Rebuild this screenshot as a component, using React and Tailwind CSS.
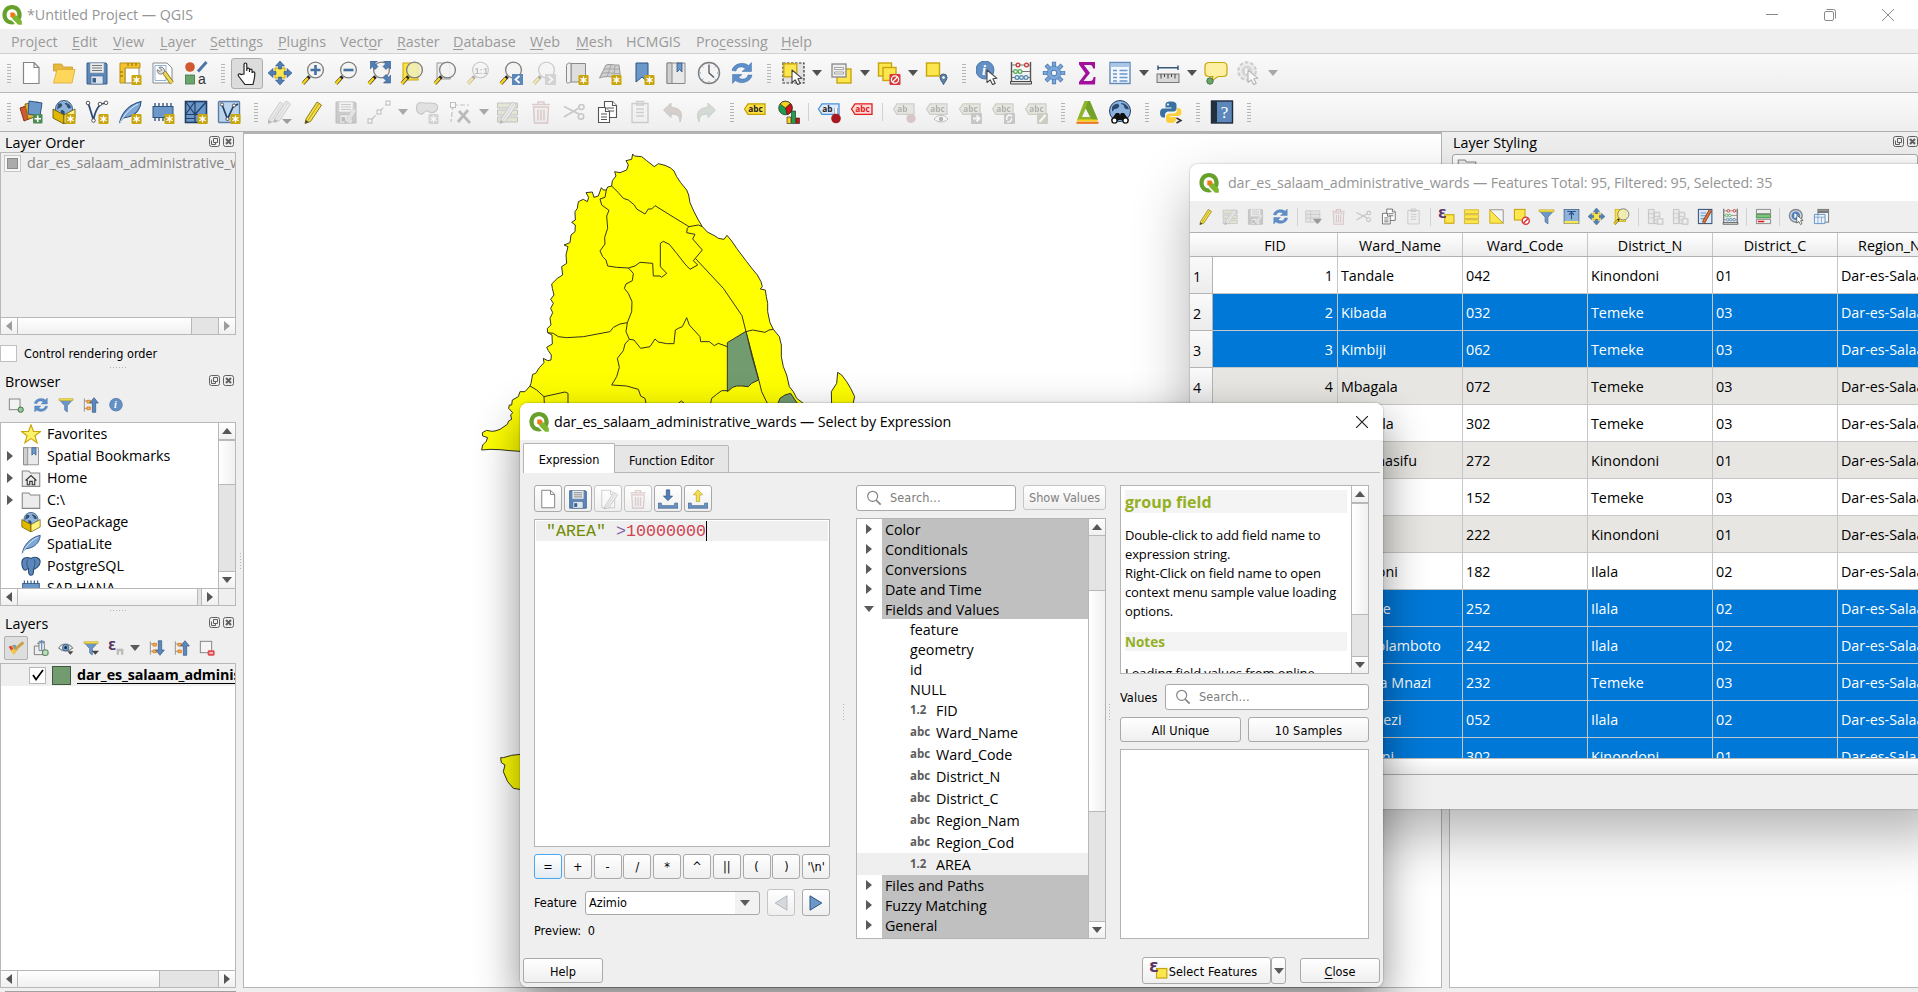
import React from "react";

/* ---------- icon pieces, all on a 24 x 24 grid ---------- */

const Svg = ({ s = "size-6", dim, children }) => (
  <svg viewBox="0 0 24 24" className={`${s} shrink-0 ${dim ? "opacity-35" : ""}`} fill="none">
    {children}
  </svg>
);

const Badge = ({ c = "#c9a50c" }) => (
  <g>
    <rect x="13.5" y="14" width="10" height="10" rx="1" fill={c} />
    <path d="M18.5 15.5v7M15.4 17.2l6.2 3.6M21.6 17.2l-6.2 3.6" stroke="#fff" strokeWidth="1.3" />
    <circle cx="18.5" cy="19" r="1.7" fill="#fff" />
  </g>
);

const Lens = ({ fill = "#f3f3f1" }) => (
  <g>
    <path d="M8.5 15.5 2 22.5" stroke="#222" strokeWidth="3.4" />
    <path d="M6.8 17.2 1.6 22.8" stroke="#f5d11b" strokeWidth="2.6" />
    <circle cx="14.5" cy="9" r="7.9" fill={fill} fillOpacity=".85" stroke="#7d7d7d" strokeWidth="1.3" />
  </g>
);

const Disk = () => (
  <g>
    <path d="M2 2h19l1 1v20H2z" fill="#5b87bb" stroke="#3b5f8d" />
    <rect x="5" y="2" width="14" height="10" fill="#e9ecef" stroke="#8a97a5" strokeWidth=".6" />
    <path d="M7 4.500h10M7 7h10M7 9.500h10" stroke="#777" />
    <rect x="6" y="15" width="12" height="8" fill="#dfe5ec" stroke="#46658e" strokeWidth=".6" />
    <rect x="7.500" y="17" width="3.500" height="4.500" fill="#3b5f8d" />
  </g>
);

const Page = () => <path d="M4.500 1.500h10.500l5 5v16h-15.500zM15 1.500v5h5" fill="#fff" stroke="#858585" strokeWidth="1.200" />;

const Pen = () => (
  <g>
    <path d="m5 19 11-17 4.500 3L9.500 21.500 4 23.500z" fill="#f3e04a" stroke="#8d7a12" />
    <path d="m18 3.500-11 17" stroke="#b99f14" />
    <path d="m4 23.500.8-3.500 3 2z" fill="#444" />
  </g>
);

const Tag = ({ fill = "#fae043", stroke = "#c2a400", ink = "#222", t = "abc" }) => (
  <g>
    <path d="M1.500 9 5 3.800h17V14.300H5z" fill={fill} stroke={stroke} strokeWidth="1.300" />
    <text x="5.300" y="12" fontSize="8.300" fontWeight="700" fontFamily="Open Sans, sans-serif" fill={ink}>{t}</text>
  </g>
);

const Trash = ({ c = "#b07a7a" }) => (
  <g stroke={c} strokeWidth="1.500">
    <path d="M4.500 7h15l-1 16h-13z" fill="#ddd" fillOpacity=".5" />
    <path d="M3 4.500h18M9 4V2h6v2M9 9.500v11M12 9.500v11M15 9.500v11" />
  </g>
);

const Sheets = () => (
  <g stroke="#555" strokeWidth="1.100" fill="#fff">
    <path d="M9.500 1.500h8l4 4v12h-12z" />
    <path d="M17.500 1.500v4h4M12 8h7M12 11h7" />
    <path d="M3.500 7.500h7l4 4v11h-11z" />
    <path d="M10.500 7.500v4h4M6 14h6M6 17h6M6 19.500h6" />
  </g>
);

const Scissors = () => (
  <g stroke="#777" strokeWidth="1.600">
    <path d="M2 6.500 17 14M2 17l15-9" />
    <circle cx="19.500" cy="7" r="2.500" />
    <circle cx="19" cy="16.500" r="2.700" />
  </g>
);

const Clip = () => (
  <g stroke="#888" strokeWidth="1.400">
    <path d="M4 3.500h16v19H4z" fill="#eee" />
    <path d="M8.500 1.500h7v3.500h-7zM8 9h8M8 12.500h8M8 16h8" />
  </g>
);

const Cycle = () => (
  <g fill="#5e8fcb" stroke="#3f6ea8" strokeWidth=".5">
    <path d="M2 9.500C3 3 13 0 18.500 4.500L21.500 1.500v9h-9.500l3.500-3C11.500 4.500 7 6 6 10z" />
    <path d="M22 14c-1 7-11 10-16.500 5.500L2.500 22.500v-9H12l-3.500 3c4 3 8.500 1.500 9.500-2.500z" />
  </g>
);

const Abacus = () => (
  <g>
    <path d="M2.500 1v21M21.500 1v21" stroke="#555" strokeWidth="1.400" />
    <path d="M3 4h18M3 10.500h18M3 16.500h18" stroke="#777" />
    <g fill="#fbe3e3" stroke="#c33" strokeWidth="1.200"><circle cx="9" cy="4" r="1.900" /><circle cx="17.500" cy="4" r="1.900" /></g>
    <g fill="#e2f5e2" stroke="#5a5" strokeWidth="1.200"><circle cx="6.500" cy="10.500" r="1.900" /><circle cx="11" cy="10.500" r="1.900" /></g>
    <g fill="#e0edf8" stroke="#58a" strokeWidth="1.200"><circle cx="8" cy="16.500" r="1.900" /><circle cx="12.500" cy="16.500" r="1.900" /><circle cx="17" cy="16.500" r="1.900" /></g>
    <path d="M1.500 20.500h21v2.500h-21z" fill="#ddd" stroke="#444" />
  </g>
);

const Pointer = () => <path d="M11 9v12.500l3.200-2.700 2.300 4.800 2.700-1.200-2.300-4.700 4.100-.4z" fill="#fff" stroke="#444" strokeWidth="1.100" strokeLinejoin="round" />;

const Funnel = () => (
  <g>
    <path d="M2 4h20l-8 9v9.500l-4-3V13z" fill="#6b97c9" stroke="#476f9e" />
    <path d="M1.500 2.500h21v3h-21z" fill="#f5e04a" stroke="#b3a024" strokeWidth=".8" />
  </g>
);

const Quad = () => (
  <g>
    <rect x="7" y="7" width="10" height="10" fill="#fbe64d" stroke="#c9a50c" />
    <g fill="#4f7fb5" stroke="#2d5584" strokeWidth=".6">
      <path d="m12 0 4.500 5H13.500v3h-3V5H7.500zM12 24l4.500-5H13.500v-3h-3v3H7.500zM0 12l5-4.500v3h3v3H5v3zM24 12l-5-4.500v3h-3v3h3v3z" />
    </g>
  </g>
);

const Globe = () => (
  <g>
    <circle cx="12" cy="9" r="8.500" fill="#8fb2da" stroke="#3c5f88" />
    <path d="M6 4c3-2 5 0 4 2s-4 2-5 4zM13 3c3 0 6 2 6 5-2 1-4 0-4-2s-3-1-2-3zM9 10c3 0 5 2 3 5-2-1-4-2-3-5z" fill="#33506f" />
  </g>
);

const Box = () => (
  <g>
    <Globe />
    <path d="m1 9 11 6v9L1 18z" fill="#e0b800" stroke="#5e4d00" strokeWidth=".8" />
    <path d="m23 9-11 6v9l11-6z" fill="#fff27a" stroke="#5e4d00" strokeWidth=".8" />
  </g>
);

const Feather = () => (
  <g>
    <path d="M1.500 23C3 15 9 5 23 1.500c0 6-4 13-13 15.500l-5 1z" fill="#7fa8d6" stroke="#2d5584" strokeWidth="1.100" />
    <path d="M2 22.500C7 13 14 7 20 4" stroke="#e4eef9" strokeWidth="1" />
  </g>
);

const Chip = () => (
  <g>
    <path d="M4 3v18M8 3v18M12 3v18M16 3v18M20 3v18" stroke="#2b4c75" strokeWidth="1.300" />
    <rect x="2" y="6.500" width="20" height="11" fill="#6b97c9" stroke="#2d5584" />
  </g>
);

const Book = () => (
  <g>
    <path d="M3 2h18v20.500H3z" fill="#e9e9e9" stroke="#888" />
    <path d="M3 2h5v20.500H3z" fill="#cfcfcf" stroke="#888" />
    <path d="M13 2h5v9l-2.500-2.500L13 11z" fill="#6b97c9" stroke="#2d5584" strokeWidth=".8" />
  </g>
);

const Map3 = () => (
  <g stroke="#8a8a8a">
    <path d="M6 2.500h14.500V21H6z" fill="#dedede" />
    <path d="M6 2.500v18.500c-4 2-4.500 1-4.500-1V4.500C2 2 4.500 1.500 6 2.500z" fill="#f0f0f0" />
  </g>
);

const Gear = ({ f = "#7ba6da", e = "#4a78ad" }) => (
  <g>
    <path d="M12 .8v22.400M.8 12h22.400M4 4l16 16M20 4 4 20" stroke={e} strokeWidth="4.200" />
    <path d="M12 1.500v21M1.500 12h21M4.600 4.600l14.800 14.800M19.400 4.600 4.600 19.400" stroke={f} strokeWidth="2.800" />
    <circle cx="12" cy="12" r="6.800" fill={f} stroke={e} strokeWidth=".6" />
    <circle cx="12" cy="12" r="2.800" fill="#f2f6fb" stroke={e} />
  </g>
);

const Info = () => (
  <g>
    <circle cx="11" cy="10.500" r="9.500" fill="#6590c4" stroke="#4673a8" />
    <text x="8" y="16" fontSize="15" fontStyle="italic" fontWeight="700" fontFamily="Liberation Serif, serif" fill="#fff">i</text>
  </g>
);

const Eps = () => (
  <text x="0" y="14.500" fontSize="18" fontWeight="700" fontFamily="DejaVu Sans, sans-serif" fill="#5c3566">Ɛ</text>
);

const Stop = () => (
  <g>
    <rect x="12.500" y="13" width="11" height="11" rx="1" fill="#d8373c" />
    <circle cx="18" cy="18.500" r="3.600" stroke="#fff" strokeWidth="1.300" />
    <path d="m15.500 21 5-5" stroke="#fff" strokeWidth="1.300" />
  </g>
);

const TreeArrow = ({ up }) => (
  <g>
    <path d="M2 2v20M2 6h7M2 17h7" stroke="#888" strokeWidth="1.300" />
    <path d="M6 5h5v4H6zM6 15h5v4H6z" fill="#f6b46a" stroke="#e07b10" strokeWidth="1.400" />
    <path d={up ? "M16.500 1 23 9h-4v14h-5V9h-4z" : "M16.500 23 23 15h-4V1h-5v14h-4z"} fill="#5b87bb" stroke="#2d5584" />
  </g>
);

const I = {
  page: <Page />,
  open: <g><path d="M1.500 3h8l2 3h9v4h-19z" fill="#e6b93a" stroke="#c9992a" strokeWidth=".8" /><path d="M1.500 22 5 8.500h18L20 22z" fill="#fdd65a" stroke="#d9aa33" strokeWidth=".8" /></g>,
  disk: <Disk />,
  layout: <g><path d="M7 6h14v16H7z" fill="#fff" stroke="#888" /><path d="M2 2h20v5H7v15H2z" fill="#f2c230" stroke="#b78f10" /><path d="M10 2v3M14 2v3M18 2v3M2 11h3M2 15h3" stroke="#8a6b00" /><Badge /></g>,
  report: <g><path d="M2 2h14l5 5v15H2z" fill="#fff" stroke="#888" /><path d="M4 4.500h11v15H4z" stroke="#8fb2da" /><path d="m13 11 8 11" stroke="#8d7a12" strokeWidth="4.500" /><path d="m13 11 8 11" stroke="#f0d660" strokeWidth="2.800" /><path d="M8 6.500c3-1.500 6 1 5.500 4.500l-3 2c-3 .5-5-2-4-4.500l2.500 2 1.500-1.500z" fill="#ddd" stroke="#777" /></g>,
  style: <g><circle cx="6" cy="6" r="4.800" fill="#d1582f" /><path d="M14 10.500 22.500 1" stroke="#4b76a8" strokeWidth="3" /><rect x="1.500" y="14" width="9" height="9" fill="#6aa56c" stroke="#407443" strokeWidth=".8" /><text x="14" y="23" fontSize="14" fontFamily="Liberation Sans, sans-serif" fill="#333">a</text></g>,
  hand: <path d="M8 13V3.500c0-2 2.800-2 2.800 0V10v-1.500c0-1.800 2.700-1.800 2.700 0V11v-1.500c0-1.800 2.600-1.800 2.600 0V12c.3-1.800 2.900-1.500 2.700.5 0 5-.8 6-1.800 11h-8L2.500 15c-1-1.800 1-3 2.500-1.500z" fill="#fff" stroke="#222" strokeWidth="1.200" transform="translate(1 0)" />,
  quad: <Quad />,
  zoomIn: <g><Lens /><path d="M14.500 4v10M9.500 9h10" stroke="#44719f" strokeWidth="2.600" /></g>,
  zoomOut: <g><Lens /><path d="M9.500 9h10" stroke="#44719f" strokeWidth="2.600" /></g>,
  full: <g><Lens /><g fill="#4f7fb5" stroke="#2d5584" strokeWidth=".6"><path d="M3.500 0h7L8 2.500l3 3-3 3-3-3L3.500 8zM23.500 0h-7L19 2.500l-3 3 3 3 3-3L23.500 8zM23.500 22h-7l2.500-2.500-3-3 3-3 3 3 1.500-2.500z" /></g></g>,
  zoomSel: <g><rect x="3" y="2" width="15" height="17" fill="#fbe53d" stroke="#c9a50c" /><Lens fill="#eeeec0" /></g>,
  zoomLayer: <g><rect x="4" y="2" width="13" height="16" fill="#eee" stroke="#999" /><Lens /></g>,
  zoomNative: <g><Lens /><text x="8.500" y="12.500" fontSize="9.500" fontWeight="700" fontFamily="Liberation Sans, sans-serif" fill="#555">1:1</text></g>,
  zoomLast: <g><Lens /><rect x="13" y="13" width="11" height="11" fill="#5b87bb" /><path d="m20.500 15-4 3.500 4 3.500" stroke="#fff" strokeWidth="1.800" /></g>,
  zoomNext: <g><Lens /><rect x="13" y="13" width="11" height="11" fill="#999" /><path d="m16.500 15 4 3.500-4 3.500" stroke="#fff" strokeWidth="1.800" /></g>,
  newMap: <g><Map3 /><Badge /></g>,
  new3d: <g><path d="M8 4c4-1.500 8 .5 13 0l1.500 12c-6 1-14-2-21 1z" fill="#d0d0d0" stroke="#999" /><path d="M6 8.500c5-2 10 .5 15.500-.5M3.500 12.500c6-2 12 .5 18.500 0M13 4 9 16M17 4.500l-1 11" stroke="#a6a6a6" /><Badge /></g>,
  newMark: <g><path d="M5 2h12v19l-6-5-6 5z" fill="#6b97c9" stroke="#2d5584" /><Badge /></g>,
  book: <Book />,
  clock: <g><circle cx="12" cy="12" r="10.500" fill="#f4f4f4" stroke="#7d7d7d" strokeWidth="1.400" /><path d="M12 4v8l5 4.500" stroke="#555" strokeWidth="1.300" /><path d="M12 2.500v1.500M12 20v1.500M2.500 12H4M20 12h1.500M5.300 5.300l1 1M17.700 17.700l1 1M5.300 18.700l1-1M17.700 6.300l1-1" stroke="#6b97c9" /></g>,
  cycle: <Cycle />,
  select: <g><path d="M2 2h21v20H2z" fill="#e2e2e2" stroke="#333" strokeWidth="1.200" strokeDasharray="2.500 1.500" /><rect x="2.800" y="2.800" width="13" height="13" fill="#fbe64d" stroke="#c9a50c" strokeWidth="1.400" /><Pointer /></g>,
  selForm: <g><rect x="8" y="8" width="14" height="14" fill="#fbe64d" stroke="#c9a50c" strokeWidth="1.400" /><rect x="3" y="3" width="14" height="13" fill="#eee" stroke="#888" strokeWidth="1.300" /><path d="M5.500 6.500h9v2h-9zM5.500 11h9v2h-9z" fill="#fff" stroke="#999" strokeWidth=".9" /></g>,
  deselect: <g><rect x="1.500" y="2" width="13" height="13" fill="#fbe64d" stroke="#c9a50c" strokeWidth="1.400" /><rect x="6" y="6.500" width="13" height="13" fill="#fbe64d" stroke="#c9a50c" strokeWidth="1.400" /><Stop /></g>,
  selLoc: <g><rect x="1.500" y="2" width="13" height="13" fill="#fbe64d" stroke="#c9a50c" strokeWidth="1.400" /><path d="M18.500 23.500c-1.500-3-3.500-5-3.500-7a3.500 3.500 0 0 1 7 0c0 2-2 4-3.500 7z" fill="#5f83a8" stroke="#3d5c7c" /><circle cx="18.500" cy="16.500" r="1.300" fill="#fff" /></g>,
  identify: <g><g transform="translate(-1.500 -1) scale(.95)"><Info /></g><Pointer /></g>,
  abacus: <Abacus />,
  gear: <Gear />,
  sigma: <path d="M4 1h16v6.500h-2C17.500 4.500 16.500 4 14 4H9l6 8-6.500 8H14c3 0 4-.5 4.500-4H20.500L20 23.500H4V21l6.500-8.500L4 3.500z" fill="#a3109e" />,
  table: <g><rect x="2" y="1.500" width="20" height="21" fill="#f2f7fc" stroke="#6289b5" strokeWidth="1.400" /><path d="M2.500 2h19v4h-19z" fill="#a9c6e6" /><path d="M5 9.500h4M5 13h4M5 16.500h4M5 20h4M11.500 9.500h8M11.500 13h8M11.500 16.500h8M11.500 20h8" stroke="#6b97c9" strokeWidth="1.600" /></g>,
  measure: <g><path d="M2 4.500v4.500M22 4.500v4.500M2 6.800h20" stroke="#36587f" strokeWidth="1.500" /><rect x="1" y="13" width="22" height="8.500" fill="#d8d8d8" stroke="#777" /><path d="M5 13v4.500M8.500 13v3M12 13v4.500M15.500 13v3M19 13v4.500" stroke="#444" /></g>,
  tips: <g><path d="M5 1.500h14c2.500 0 4 1.500 4 4v6c0 2.500-1.500 4-4 4h-5L6 21l3-5.500H5c-2.500 0-4-1.500-4-4v-6c0-2.500 1.500-4 4-4z" fill="#fdf0a0" stroke="#c9a50c" strokeWidth="1.200" /><circle cx="6" cy="20" r="3.200" fill="#6ba56c" stroke="#407443" /></g>,
  action: <g><g transform="translate(-1 -1) scale(.92)"><circle cx="12" cy="12" r="9.500" fill="#ddd" stroke="#888" strokeWidth="2.500" strokeDasharray="4 2" /><circle cx="12" cy="12" r="6" fill="#999" /><path d="m10 8.500 6 3.500-6 3.500z" fill="#fff" /></g><Pointer /></g>,

  dsm: <g><path d="m1 8 12-4 4 12-12 5z" fill="#d1582f" stroke="#8a3416" /><path d="m6 4 13-2 1 14-11 3z" fill="#e0b23b" stroke="#8a6b00" /><path d="m10 1 13 2-2 13-12-2z" fill="#6b97c9" stroke="#2d5584" /><rect x="14" y="14" width="9.500" height="9.500" rx="1" fill="#4d8b55" /><path d="M18.700 15.500v6.500M15.500 18.700h6.500" stroke="#fff" strokeWidth="1.600" /></g>,
  gpkg: <g><Box /><Badge /></g>,
  vee: <g><path d="M3.500 4c2 6 3 10 5 16M8.500 20c1-6 3-11 6-14.500M14.500 4.500l6-1.500" stroke="#2b4c75" strokeWidth="1.800" /><g fill="#fff" stroke="#555"><circle cx="3" cy="3" r="1.800" /><circle cx="15" cy="4" r="1.800" /><circle cx="21" cy="2.800" r="1.800" /><circle cx="8.500" cy="20.500" r="1.800" /></g><Badge /></g>,
  featherNew: <g><Feather /><Badge /></g>,
  chipNew: <g><Chip /><Badge /></g>,
  mesh: <g><rect x="1.500" y="1.500" width="21" height="21" fill="#6b97c9" stroke="#1f3f66" strokeWidth="1.600" /><path d="M1.500 14.500h21M11 1.500v21M1.500 1.500l9.500 13M11 1.500l-9.500 13M11 14.500l11.500-13M1.500 18.500H11" stroke="#1f3f66" strokeWidth="1.200" /><Badge /></g>,
  vLayer: <g><rect x="1.500" y="1.500" width="21" height="21" rx="1" fill="#bcd3ec" stroke="#5a7ea8" strokeWidth="1.400" /><path d="M5 4.500 10.500 19 16 7l5-3" stroke="#1f3f66" strokeWidth="1.700" /><g fill="#fff" stroke="#555"><circle cx="5" cy="4.500" r="1.600" /><circle cx="10.500" cy="19" r="1.600" /><circle cx="17" cy="5.500" r="1.600" /></g><Badge /></g>,
  pencils: <g><g transform="translate(-4 0)" className="grayscale"><Pen /></g><g transform="translate(2 -1)" className="grayscale"><Pen /></g><path d="M14 19h10l-5 5z" fill="#000" /></g>,
  pen: <Pen />,
  saveEdits: <g className="grayscale"><Disk /><g transform="translate(8 7) scale(.7)"><Pen /></g></g>,
  line: <g><path d="m3 21 18-18" stroke="#666" strokeWidth="1.200" strokeDasharray="8 3" /><g fill="#fff" stroke="#555"><rect x="1" y="19" width="4" height="4" /><rect x="10" y="10" width="4" height="4" /><rect x="19" y="1" width="4" height="4" /></g></g>,
  blob: <g><path d="M1.500 8c0-6 5-6 8-5s12-2 13 3-5 8-8 6-4-1-6 1-7 1-7-5z" fill="#bbb" stroke="#777" strokeWidth="1.200" /><Badge c="#999" /></g>,
  vertex: <g><path d="M5 5h16M5 5 3 22" stroke="#666" strokeWidth="1.200" strokeDasharray="5 2" /><rect x="2.500" y="2.500" width="5" height="5" fill="#fff" stroke="#555" /><path d="m10 22 10-12M11 11l11 12" stroke="#555" strokeWidth="2.800" /></g>,
  multi: <g><path d="M1.500 3h20v5h-20zM1.500 10h20v5h-20zM1.500 17h20v5h-20z" fill="#c8c89a" stroke="#666" /><g className="grayscale"><Pen /></g></g>,
  trash: <Trash />,
  cut: <Scissors />,
  copy: <Sheets />,
  paste: <Clip />,
  undo: <path d="M1.500 10 9 3v4.500c8 0 13 4 9 14.500 0-6-3-8-9-8V17.500z" fill="#a08a80" stroke="#777" transform="translate(1 0)" />,
  redo: <path d="M1.500 10 9 3v4.500c8 0 13 4 9 14.500 0-6-3-8-9-8V17.500z" fill="#9a9" stroke="#787" transform="matrix(-1 0 0 1 23 0)" />,
  tag: <Tag />,
  diagram: <g transform="translate(1.500 0)"><circle cx="8" cy="8" r="6.800" fill="#1f9e4b" stroke="#222" strokeWidth=".7" /><path d="M8 8 2.500 4A6.800 6.800 0 0 1 13 3.500z" fill="#f6d21b" stroke="#222" strokeWidth=".6" /><path d="M8 8 13 3.500A6.800 6.800 0 0 1 9.500 14.600z" fill="#c81414" stroke="#222" strokeWidth=".6" /><path d="M9.500 17h4v6.500h-4z" fill="#f6d21b" stroke="#222" strokeWidth=".6" /><path d="M14 11h4v12.500h-4z" fill="#1f9e4b" stroke="#222" strokeWidth=".6" /><path d="M18.500 18H22v5.500h-3.500z" fill="#c81414" stroke="#222" strokeWidth=".6" /></g>,
  tagPin: <g><Tag fill="#dbeafc" stroke="#4a90d9" t="ab" /><path d="M19 8v8" stroke="#999" strokeWidth="3.400" /><path d="M19 8v8" stroke="#fff" strokeWidth="1.800" /><circle cx="19" cy="18.500" r="4.800" fill="#a81a22" /></g>,
  tagRed: <Tag fill="#ffd9d9" stroke="#e21b1b" ink="#e21b1b" />,
  gPin: <g><Tag fill="#ccb" stroke="#888" ink="#333" t="ab" /><circle cx="19" cy="18.500" r="4.600" fill="#a77" /></g>,
  gEye: <g><Tag fill="#ccb" stroke="#888" ink="#333" /><path d="M9 19c4-5 10-5 14 0-4 4-10 4-14 0z" fill="#fff" stroke="#555" /><circle cx="16" cy="19" r="2.200" fill="#444" /></g>,
  gMove: <g><Tag fill="#ccb" stroke="#886" ink="#333" /><rect x="13" y="13" width="11" height="11" rx="1" fill="#777" /><path d="M15 18.500h6M18.500 15.500l3 3-3 3" stroke="#fff" strokeWidth="1.800" /></g>,
  gTurn: <g><Tag fill="#ccb" stroke="#886" ink="#333" /><rect x="13" y="13" width="11" height="11" rx="1" fill="#777" /><path d="M21 16.500c-3-3-6.500 0-5 3.500M16 22c3 0 5-1 4.500-4" stroke="#fff" strokeWidth="1.600" /></g>,
  gEdit: <g><Tag fill="#ccb" stroke="#886" ink="#333" /><rect x="13" y="13" width="11" height="11" rx="1" fill="#886" /><path d="m15.500 22 6-7" stroke="#fff" strokeWidth="2" /></g>,
  delta: <g><path d="M9.500 1h4.500L22.500 20H2zM10.800 8.500 7 17h8z" fill="#8fb62b" fillRule="evenodd" /><path d="M13 1h2l8 19h-5.500L10.800 8.500z" fill="#72a02a" /><path d="M2 20.500h20.500" stroke="#f6d21b" strokeWidth="2" /><path d="M1.500 22.800h22" stroke="#ee7a22" strokeWidth="2.200" /></g>,
  binoc: <g><circle cx="12" cy="11" r="10.500" fill="#8db1dd" stroke="#223f63" /><path d="M4 7c3-4 6-4 7-2s-2 4-4 4-1 3-3 2zM13 3c4 0 7 3 8 6-3 1-5-1-5-3s-3-1-3-3z" fill="#284a72" /><path d="M8 13h3l1 2 1-2h3l5 7-4 3-3.500-3h-3L7 23l-4-3z" fill="#111" /><circle cx="6.500" cy="20.500" r="2.600" fill="#fff" stroke="#111" strokeWidth="1.400" /><circle cx="17.500" cy="20.500" r="2.600" fill="#fff" stroke="#111" strokeWidth="1.400" /></g>,
  python: <g><path d="M11.500 1.500c-4 0-5 1.500-5 3.500v2.500h6v1H4.500C2 8.500 1 10.500 1 13s1 4.500 3.500 4.500H6V15c0-2 1.500-3.500 3.500-3.500h5c2 0 3-1.500 3-3V5c0-2-1.500-3.500-6-3.500z" fill="#3872a3" /><path d="M11.500 23c4 0 5.500-1.500 5.500-3.500V17h-6v-1h8c2.500 0 3.500-2 3.500-4s-1-4-3.500-4h-1v2c0 2-1.500 3.500-3.500 3.500h-4C8.500 13.500 7 15 7 16.500v3c0 2 1 3.500 4.500 3.500z" fill="#fdd03b" /><circle cx="9" cy="4.500" r="1" fill="#fff" /><path d="m17.500 18 4.500 2.500-4.500 2.500" stroke="#333" strokeWidth="1.500" /></g>,
  help: <g><rect x="1.500" y="1" width="21" height="22" fill="#5b87bb" stroke="#1d2a3a" strokeWidth="1.400" /><path d="M1.500 1H7v22H1.500z" fill="#22303f" /><text x="10.800" y="18" fontSize="17" fontFamily="Liberation Serif, serif" fill="#fff">?</text></g>,

  funnel: <Funnel />,
  addLayer: <g><rect x="2" y="3" width="16" height="16" fill="#f2f2f2" stroke="#888" strokeWidth="1.500" /><circle cx="19" cy="19" r="4" fill="#9cc79d" stroke="#407443" strokeWidth="1.500" /></g>,
  delLayer: <g><rect x="2" y="2" width="17" height="17" fill="#f5f5f5" stroke="#888" strokeWidth="1.500" /><rect x="13" y="15.500" width="10.500" height="8" rx="2" fill="#e04a4f" /><path d="M15.500 19.500h5.500" stroke="#fff" strokeWidth="1.800" /></g>,
  treeUp: <TreeArrow up />,
  treeDown: <TreeArrow />,
  info: <g transform="translate(1 1)"><Info /></g>,
  star: <path d="m12 1 3 8h8.500l-6.800 5 2.600 8.500L12 17.500l-7.300 5L7.300 14 .5 9H9z" fill="#fcf169" stroke="#c9a50c" strokeWidth="1.400" />,
  home: <g><path d="M1.500 3.500h8l2 2.500h11v16h-21z" fill="#ececec" stroke="#888" strokeWidth="1.300" /><path d="m5.500 15 6.500-6 6.500 6M7.500 14v6h3v-4h3v4h3v-6" stroke="#333" strokeWidth="1.300" /></g>,
  folder: <path d="M1.500 3.500h8l2 2.500h11v16h-21z" fill="#ececec" stroke="#888" strokeWidth="1.300" />,
  box: <Box />,
  feather: <Feather />,
  elephant: <g><path d="M12 3C6 0 1 3 1 8s2 9 4 9 2-2 4-2v3c0 3 1 5 3 5s3-2 3-5v-2c2 0 8-4 8-9S17 0 12 3z" fill="#5b87bb" stroke="#2b4c75" strokeWidth="1.300" /><path d="M8 4c-2 4-1 8 1 11M16 4c2 4 0 8-1 12" stroke="#2b4c75" /></g>,
  chip: <Chip />,
  brush: <g><path d="m1 10 8-3 6 7-6 8z" fill="#e8b13a" /><path d="m1 10 4-1.500 3 5.500-3 2z" fill="#d8433c" /><path d="M3 16l6-3 3 4-3 5z" fill="#efc94f" /><path d="m7 8 4-1 3 5-4 2z" fill="#6b97c9" /><path d="m12 13 11-9.500" stroke="#caa24d" strokeWidth="4.500" /></g>,
  group: <g><path d="M2 9h13v13H2zM6 5h9v13" stroke="#777" strokeWidth="1.400" /><path d="M9 2h8v14H9z" fill="#eaf1f8" stroke="#777" strokeWidth="1.300" /><path d="M13 1v14M10 5l3-4 3 4" stroke="#5b87bb" strokeWidth="1.600" /><rect x="14.500" y="15" width="8" height="8" rx="2" fill="#bfe0c0" stroke="#407443" strokeWidth="1.400" /></g>,
  eye: <g><path d="M1 12C6 4 16 4 22 12c-6 6-15 6-21 0z" fill="#f4f4f4" stroke="#888" strokeWidth="1.600" /><circle cx="11.500" cy="11.500" r="5" fill="#6b97c9" stroke="#36587f" /><circle cx="11.500" cy="11.500" r="2" fill="#123" /><path d="M14 17h9l-4.500 5z" fill="#444" /></g>,
  funnelDown: <g><Funnel /><path d="M13 16h11l-5.500 6z" fill="#444" /></g>,
  epsLayer: <g><Eps /><path d="M13 13h10v9h-3.500v-5h-3v5H13z" fill="#bbb" /></g>,

  epsSel: <g><rect x="9.500" y="9.500" width="13" height="12" fill="#fbe64d" stroke="#c9a50c" strokeWidth="1.500" /><Eps /></g>,
  rows: <path d="M2 2.500h20v5.500H2zM2 9.500h20V15H2zM2 16.500h20V22H2z" fill="#fbe64d" stroke="#c9a50c" />,
  invert: <g><path d="M2.500 2.500h19v19z" fill="#f4f4f4" stroke="#888" strokeWidth="1.200" /><path d="M2.500 2.500v19h19z" fill="#fbe64d" stroke="#c9a50c" strokeWidth="1.200" /></g>,
  unselect: <g><rect x="2" y="2" width="15" height="15" fill="#fbe64d" stroke="#c9a50c" strokeWidth="1.500" /><circle cx="18" cy="18" r="5" fill="#fff" stroke="#d8373c" strokeWidth="2" /><path d="m15 21 6-6" stroke="#d8373c" strokeWidth="2" /></g>,
  moveTop: <g><rect x="1.500" y="2" width="21" height="20" fill="#8fb2da" stroke="#36587f" /><path d="M2 18.500h20v3.500H2z" fill="#fbe64d" /><path d="M12 6v10M8.500 9.500 12 6l3.500 3.500M6 5h12" stroke="#2a5283" strokeWidth="1.600" /></g>,
  field: <g><path d="M2 2h8v20H2zM10 6h8v16h-8z" fill="#ddd" stroke="#777" strokeWidth="1.400" /><path d="M2 8h8M2 14h8M10 12h8M10 17h8" stroke="#777" /><Badge c="#999" /></g>,
  editForm: <g><rect x="2" y="2" width="19" height="20" fill="#dbe7f5" stroke="#36587f" strokeWidth="1.500" /><path d="M5 7h8M5 11h8M5 15h6" stroke="#6b97c9" strokeWidth="1.500" /><path d="M9 21 19 3" stroke="#7a2f10" strokeWidth="4.500" /><path d="M9 21 19 3" stroke="#e2793a" strokeWidth="2.800" /></g>,
  cond: <g><path d="M2 2h20v6H2z" fill="#eee" stroke="#666" /><path d="M2 9h20v5H2z" fill="#7cc47f" stroke="#2e7d32" /><path d="M2 16h20v6H2z" fill="#eee" stroke="#666" /><path d="M4 19h9" stroke="#e21b1b" strokeWidth="2" /></g>,
  actionOn: <g><circle cx="11" cy="11" r="9" fill="#c9d9eb" stroke="#888" strokeWidth="2" /><circle cx="11" cy="11" r="6" fill="#4f7fb5" /><path d="m9 7.500 6 3.500-6 3.500z" fill="#fff" /><g transform="translate(2.500 2) scale(.9)"><Pointer /></g></g>,
  dock: <g><rect x="7" y="2" width="15" height="18" fill="#f4f4f4" stroke="#777" strokeWidth="1.400" /><path d="M7 3h15v4H7z" fill="#777" /><path d="M2 9h15v13H2z" fill="#eaf1f8" stroke="#6b97c9" strokeWidth="1.400" /><path d="M2 13h15M7 9v13M12 13v9" stroke="#6b97c9" /></g>,
  newItem: <g><rect x="1" y="4" width="20" height="16" fill="#ccc" stroke="#777" /><path d="M1 9h20M1 14h20M8 4v16" stroke="#777" /><path d="M11 15h13l-6.500 8z" fill="#000" /></g>,
  editPage: <g><Page /><g transform="translate(3 2)" className="grayscale"><Pen /></g></g>,
  importI: <g><path d="M12 14 6.500 8.500H10V1h4v7.500h3.500z" fill="#4f7fb5" stroke="#2d5584" strokeWidth=".8" /><path d="M0 17h4v3h16v-3h4v6H0z" fill="#6b97c9" stroke="#36587f" strokeWidth=".8" /></g>,
  exportI: <g><path d="M12 1 6.500 7H10v8h4V7h3.500z" fill="#f5e04a" stroke="#b3a024" strokeWidth=".8" /><path d="M0 17h4v3h16v-3h4v6H0z" fill="#6b97c9" stroke="#36587f" strokeWidth=".8" /></g>,
  search: <g><circle cx="10" cy="9.500" r="7.500" stroke="#858585" strokeWidth="1.800" /><path d="m15 15 7 7" stroke="#858585" strokeWidth="2.600" /></g>,
};

const Logo = () => (
  <svg viewBox="0 0 24 24" className="size-5 shrink-0">
    <path d="M12 0C5.300 0 .5 5 .5 11.800S5.300 23.500 12 23.500c1.300 0 2.500-.2 3.600-.6l-4-4.200C8 18.500 5.600 15.500 5.600 11.800 5.600 7.800 8.200 5 12 5s6.400 2.800 6.400 6.600c0 1-.2 1.800-.4 2.600l3.800 3.800c1.200-1.700 1.800-3.900 1.800-6.200C23.600 5 18.700 0 12 0z" fill="#68a02c" />
    <path d="M12.500 12.300h4.600l6.700 7v4.500h-4.400l-6.900-7z" fill="#7db72f" />
    <path d="M10 9h4.500l2 2.500-4.200 4.500L10 13.500z" fill="#ee7913" />
  </svg>
);

/* ---------- small controls ---------- */

const Tri = ({ d, c = "#5a5a5a" }) => {
  const p = { down: "M0 2h10L5 8z", up: "M0 8h10L5 2z", left: "M8 0v10L2 5z", right: "M2 0v10l6-5z" }[d];
  return <svg viewBox="0 0 10 10" className="size-[10px] shrink-0"><path d={p} fill={c} /></svg>;
};

const Grip = ({ w = "w-[18px]" }) => (
  <div className={`${w} flex shrink-0 items-center justify-center pl-[3px]`}>
    <div className="h-[21px] w-[4px] bg-[radial-gradient(circle,#b4b4b4_0.6px,transparent_0.9px)] bg-[length:2px_3px]" />
  </div>
);
const Caret = ({ dim }) => <div className="flex w-[15px] shrink-0 items-center justify-center"><Tri d="down" c={dim ? "#a8a8a8" : "#505050"} /></div>;
const Sep = ({ w = "w-[8.500px]" }) => <div className={`${w} flex shrink-0 justify-center`}><div className="h-[18px] w-px bg-[#d2d2d2]" /></div>;

const Tool = ({ n, dim, on }) => (
  <div className="flex w-[33px] shrink-0 items-center justify-center">
    <div className={on ? "flex h-[31px] w-[32px] shrink-0 items-center justify-center rounded-[3px] border border-[#adadad] bg-[#dcdcdc]" : ""}>
      <Svg dim={dim}>{I[n]}</Svg>
    </div>
  </div>
);

/* entries: "|" and ":" grips, "v" caret, "-" separator, "~name" disabled, "+name" pressed */
const Bar = ({ items }) =>
  items.map((k, i) => {
    if (k === "|") return <Grip key={i} />;
    if (k === ":") return <Grip key={i} w="w-[16px]" />;
    if (k === "v") return <Caret key={i} />;
    if (k === "~v") return <Caret key={i} dim />;
    if (k === "-") return <Sep key={i} />;
    return <Tool key={i} n={k.replace(/^[~+]/, "")} dim={k[0] === "~"} on={k[0] === "+"} />;
  });

const DockButtons = () => (
  <div className="flex gap-[3px]">
    <svg viewBox="0 0 11 11" className="size-[11px]" fill="none" stroke="#606060"><rect x=".5" y=".5" width="10" height="10" rx="2" /><path d="M4.500 2.500h4v4h-4zM2.500 4.500v4h4v-2" /></svg>
    <svg viewBox="0 0 11 11" className="size-[11px]" fill="none" stroke="#606060"><rect x=".5" y=".5" width="10" height="10" rx="2" /><path d="m3 3 5 5M8 3 3 8" strokeWidth="2" /></svg>
  </div>
);

const DockTitle = ({ children, cls = "" }) => (
  <div className={`flex h-[22px] shrink-0 justify-between pr-[2px] pl-[5px] text-[14.3px] leading-[22px] text-black ${cls}`}>
    <span>{children}</span>
    <div className="pt-[4px]"><DockButtons /></div>
  </div>
);

const End = ({ d, dim, cls }) => (
  <div className={`flex shrink-0 items-center justify-center bg-linear-to-b from-white to-[#f0f0f0] ${cls}`}><Tri d={d} c={dim ? "#9c9c9c" : "#565656"} /></div>
);

const HBar = ({ slider, dim, corner }) => (
  <div className="flex h-[17px] shrink-0 border-t border-[#b8b8b8] bg-[#e4e4e4]">
    <End d="left" dim={dim} cls="w-[17px] border-r border-[#b8b8b8]" />
    <div className={`${slider} border-r border-[#b8b8b8] bg-linear-to-b from-white to-[#f0f0f0]`} />
    <div className="flex-1" />
    <End d="right" dim={dim} cls="w-[17px] border-l border-[#b8b8b8]" />
    {corner && <div className="w-[17px] border-l border-[#b8b8b8] bg-[#efefef]" />}
  </div>
);

const VBar = ({ top, slider }) => (
  <div className="flex w-[17px] shrink-0 flex-col border-l border-[#b8b8b8] bg-[#e4e4e4]">
    <End d="up" cls="h-[17px] border-b border-[#b8b8b8]" />
    <div className={top} />
    <div className={`${slider} border-y border-[#b8b8b8] bg-linear-to-r from-white to-[#f0f0f0]`} />
    <div className="flex-1" />
    <End d="down" cls="h-[17px] border-t border-[#b8b8b8]" />
  </div>
);

const Dots = ({ cls = "" }) => <div className={`mx-auto h-px w-[16px] shrink-0 bg-[repeating-linear-gradient(90deg,#b4b4b4_0_1px,transparent_1px_3px)] ${cls}`} />;
const VDots = () => <div className="h-[17px] w-px bg-[repeating-linear-gradient(180deg,#b4b4b4_0_1px,transparent_1px_3px)]" />;

const PushBtn = ({ cls = "", dim, focus, children }) => (
  <div className={`flex shrink-0 items-center justify-center rounded-[3px] border bg-linear-to-b from-white ${focus ? "border-[#4ba6f0] to-[#e2eaf2]" : dim ? "border-[#c4c4c4] to-[#efefef]" : "border-[#a9a9a9] to-[#efefef]"} ${cls}`}>
    {children}
  </div>
);

const U = ({ children }) => <span className="underline decoration-1 underline-offset-2">{children}</span>;

/* ---------- main window ---------- */

const MENU = [
  ["w-[61px]", "Pro", "j", "ect"], ["w-[41px]", "", "E", "dit"], ["w-[47px]", "", "V", "iew"], ["w-[50px]", "", "L", "ayer"],
  ["w-[68px]", "", "S", "ettings"], ["w-[62px]", "", "P", "lugins"], ["w-[57px]", "Vect", "o", "r"], ["w-[56px]", "", "R", "aster"],
  ["w-[77px]", "", "D", "atabase"], ["w-[46px]", "", "W", "eb"], ["w-[50px]", "", "M", "esh"], ["w-[70px]", "HCMGIS", "", ""],
  ["w-[85px]", "Pro", "c", "essing"], ["w-[40px]", "", "H", "elp"],
];

const ROW1 = ["page", "open", "disk", "layout", "report", "style", "|", "+hand", "quad", "zoomIn", "zoomOut", "full", "zoomSel", "zoomLayer", "~zoomNative", "zoomLast", "~zoomNext", "newMap", "new3d", "newMark", "book", "clock", "cycle", "|", "select", "v", "selForm", "v", "deselect", "v", "selLoc", "|", "identify", "abacus", "gear", "sigma", "table", "v", "measure", "v", "tips", "~action", "~v"];
const ROW2 = ["dsm", "gpkg", "vee", "featherNew", "chipNew", "mesh", "vLayer", "|", "~pencils", "pen", "~saveEdits", "~line", "~v", "~blob", "~vertex", "~v", "~multi", "~trash", "~cut", "copy", "~paste", "~undo", "~redo", ":", "tag", "diagram", "-", "tagPin", "tagRed", "-", "~gPin", "~gEye", "~gMove", "~gTurn", "~gEdit", "|", "delta", "binoc", "|", "python", "|", "help", "|"];

const BROWSER = [
  ["star", "Favorites", false], ["book", "Spatial Bookmarks", true], ["home", "Home", true], ["folder", "C:\\", true],
  ["box", "GeoPackage", false], ["feather", "SpatiaLite", false], ["elephant", "PostgreSQL", false], ["chip", "SAP HANA", false],
];

const SmallTool = ({ n }) => <div className="flex w-[25px] shrink-0 items-center justify-center"><Svg s="size-4">{I[n]}</Svg></div>;

const LeftDock = () => (
  <div className="flex w-[236px] shrink-0 flex-col">
    <DockTitle cls="-mb-[2px]">Layer Order</DockTitle>
    <div className="flex h-[183px] shrink-0 flex-col border border-[#b8b8b8]">
      <div className="-mt-px flex h-[22px] items-center gap-[6px] overflow-hidden pl-[3px] whitespace-nowrap text-[#868686]">
        <div className="flex size-[17px] shrink-0 items-center justify-center border border-[#c6c6c6] bg-[#f6f6f6]"><div className="size-[11px] border border-[#8a8a8a] bg-[#ababab]" /></div>
        <span className="text-[14.3px] tracking-[-0.07px]">dar_es_salaam_administrative_wards</span>
      </div>
      <div className="flex-1" />
      <HBar slider="w-[174px]" dim />
    </div>
    <div className="flex h-[37px] shrink-0 items-center gap-[7px]">
      <div className="size-[17px] border border-[#c0c0c0] bg-white" />
      <span className="pt-[2px] font-['DejaVu_Sans_Condensed','DejaVu_Sans',sans-serif] text-[12.6px]">Control rendering order</span>
    </div>
    <Dots cls="-mt-[5px] mb-[3px]" />
    <DockTitle>Browser</DockTitle>
    <div className="mb-[5px] flex h-[24px] shrink-0 items-center pl-[3px]">
      <SmallTool n="addLayer" /><SmallTool n="cycle" /><SmallTool n="funnel" /><SmallTool n="treeUp" /><SmallTool n="info" />
    </div>
    <div className="flex h-[184px] shrink-0 flex-col border border-[#b8b8b8] bg-white">
      <div className="flex min-h-0 flex-1">
        <div className="flex-1 overflow-hidden">
          {BROWSER.map(([ic, t, kids]) => (
            <div key={t} className="flex h-[22px] items-center">
              <div className="w-[20px] pl-[4px]">{kids && <Tri d="right" />}</div>
              <Svg s="size-5">{I[ic]}</Svg>
              <span className="pl-[6px] text-[14.3px] tracking-[-0.03px]">{t}</span>
            </div>
          ))}
        </div>
        <VBar top="h-0" slider="h-[45px]" />
      </div>
      <HBar slider="w-[180px]" corner />
    </div>
    <Dots cls="mt-[4px] mb-[2px]" />
    <DockTitle>Layers</DockTitle>
    <div className="mb-[3px] flex h-[25px] shrink-0 items-center pl-[4px]">
      <div className="flex h-[24px] w-[24px] items-center justify-center rounded-[2px] border border-[#b0b0b0] bg-[#dedede]"><Svg s="size-4">{I.brush}</Svg></div>
      <SmallTool n="group" /><SmallTool n="eye" /><SmallTool n="funnelDown" /><SmallTool n="epsLayer" /><div className="w-[16px] pl-[2px]"><Tri d="down" /></div>
      <SmallTool n="treeDown" /><SmallTool n="treeUp" /><SmallTool n="delLayer" />
    </div>
    <div className="flex h-[325px] shrink-0 flex-col border border-[#b8b8b8] bg-white">
      <div className="flex h-[22px] items-center overflow-hidden bg-[#efefef] pl-[28px] whitespace-nowrap">
        <div className="flex size-[17px] shrink-0 items-center justify-center border border-[#b8b8b8] bg-white">
          <svg viewBox="0 0 12 12" className="size-3" fill="none" stroke="#000" strokeWidth="1.700"><path d="m1 6 3 4.500L11 1" /></svg>
        </div>
        <div className="ml-[6px] size-[19px] shrink-0 border border-[#42573f] bg-[#729b6f]" />
        <span className="pl-[6px] text-[14.3px] font-bold tracking-[-0.1px] underline underline-offset-[3px]">dar_es_salaam_administrative_wards</span>
      </div>
      <div className="flex-1" />
      <HBar slider="w-[142px]" />
    </div>
    <div className="mt-[3px] ml-[5px] h-px shrink-0 bg-[#a0a0a0]" />
  </div>
);

const WARDS = "M488 42 493 48 515 50 530 62 553 80 565 71 585 76 602 84 612 93 620 110 632 128 650 150 656 165 660 188 672 215 685 240 697 260 712 276 735 288 745 295 762 298 771 286 785 303 800 325 815 345 830 365 847 387 862 405 873 425 877 440 871 447 886 450 889 470 893 490 893 515 900 548 910 568 928 590 934 615 934 650 940 680 950 705 958 740 970 755 980 775 1000 790V960H160L150 934 120 932 90 929 60 928 35 930 38 915 48 905 53 893 38 888 37 878 50 871 65 874 75 873 90 868 112 853 116 843 125 838 122 825 128 818 116 805 118 795 125 795 127 780 145 770 150 755 165 755 180 738 183 730 188 703 197 700 208 683 222 668 220 655 233 662 243 660 244 645 235 632 230 622 247 612 246 585 233 578 232 565 243 555 240 535 248 518 242 505 250 490 242 478 252 465 247 445 245 432 262 415 278 405 275 380 290 370 288 345 294 320 282 315 300 308 303 285 315 275 316 255 305 247 316 240 315 215 322 205 325 185 340 178 352 185 356 172 348 158 367 156 372 172 385 168 394 143 400 150 409 150 413 141 425 138 427 122 438 108 434 95 450 98 470 90 475 75 468 62 485 58Z";
const LINES = [
  "M425 138 445 158 460 175 475 180 493 195 500 207 525 222 535 207 545 207 555 197 600 225 657 260 685 255 697 260",
  "M409 150 405 172 390 177 395 195 417 211 410 228 413 265 404 292 405 312 390 333 398 350 408 360 413 378 440 382 475 384 495 378 510 367 548 370 550 408 570 408 575 412 590 400 571 380 571 310 580 304 598 313 620 340 645 372 660 388 683 375 670 362 676 355 697 330 668 297 675 283 650 278 652 265 657 260",
  "M676 355 760 445 816 527 828 575M828 575 848 570 885 577 897 570 910 568M828 575 848 650 867 722 875 755 892 790",
  "M475 384 490 400 487 422 468 432 463 445 475 460 486 485 485 515 472 548 468 575 478 598M472 548 450 552 430 562 420 575 340 590 290 593 265 590 250 580 233 578",
  "M478 598 492 600 512 625 540 620 555 597 565 606 590 611 612 611 616 570 625 565 637 560 650 533 658 555 690 590 692 605 718 605 733 617 745 610 772 620",
  "M478 598 465 612 460 632 442 655 448 682 440 710 425 735 470 738 505 748 512 768 525 775 528 790M180 738 200 750 222 770 223 790M222 770 285 756 294 760 294 790M722 790 725 775 740 763 755 752 772 752M625 790 634 783 643 790",
];

const MapCanvas = () => (
  <div className="h-[856px] w-[1199px] shrink-0 overflow-hidden border border-t-2 border-[#b4b4b4] bg-white">
    <svg viewBox="0 0 1197 853" className="h-[853px] w-[1197px]">
      <g transform="translate(226 6) scale(.33333)" stroke="#333323" strokeWidth="3" strokeLinejoin="round" fill="none">
        <path d={WARDS} fill="#ffff00" />
        {LINES.map((d) => <path key={d} d={d} />)}
        <path d="M772 608 828 574 846 650 866 720 855 725 845 730 835 740 815 738 800 738 788 742 772 755Z" fill="#729b6f" />
        <path d="M920 800 930 775 945 765 962 760 975 780 990 800Z" fill="#729b6f" />
        <path d="M1103 697 1115 705 1130 725 1142 745 1154 770 1147 800H1085L1084 755 1100 730Z" fill="#ffff00" />
        <path d="M160 1842 125 1846 100 1853 92 1853 94 1868 105 1875 100 1895 113 1925 130 1945 160 1950Z" fill="#ffff00" />
      </g>
    </svg>
  </div>
);

/* ---------- attribute table window ---------- */

const COLS = ["FID", "Ward_Name", "Ward_Code", "District_N", "District_C", "Region_Nam"];
const ROWS = [
  ["Tandale", "042", "Kinondoni", "01"], ["Kibada", "032", "Temeke", "03", 1], ["Kimbiji", "062", "Temeke", "03", 1], ["Mbagala", "072", "Temeke", "03"],
  ["Sandala", "302", "Temeke", "03"], ["Hananasifu", "272", "Kinondoni", "01"], ["Keko", "152", "Temeke", "03"], ["Kawe", "222", "Kinondoni", "01"],
  ["Kivukoni", "182", "Ilala", "02"], ["Majohe", "252", "Ilala", "02", 1], ["Gongolamboto", "242", "Ilala", "02", 1], ["Pemba Mnazi", "232", "Temeke", "03", 1],
  ["Kinyerezi", "052", "Ilala", "02", 1], ["Mbweni", "302", "Kinondoni", "01", 1],
];
const TTOOLS = ["pen", "~multi", "~saveEdits", "cycle", "-", "~newItem", "~trash", "~cut", "copy", "~paste", "-", "epsSel", "rows", "invert", "unselect", "funnel", "moveTop", "quad", "zoomSel", "-", "~field", "~field", "editForm", "abacus", "-", "cond", "-", "actionOn", "dock"];

const AttributeTable = () => (
  <div className="absolute top-[164px] left-[1190px] flex h-[645px] w-[760px] flex-col overflow-hidden rounded-tl-[8px] bg-[#efefef] shadow-[0_0_2px_rgba(0,0,0,0.35),0_26px_56px_rgba(0,0,0,0.3)]">
    <div className="flex h-[37px] shrink-0 items-center gap-[9px] bg-white pl-[9px] text-[14.3px] tracking-[-0.13px] text-[#959595]"><Logo />dar_es_salaam_administrative_wards — Features Total: 95, Filtered: 95, Selected: 35</div>
    <div className="flex h-[31px] shrink-0 items-center pl-[3px]">
      {TTOOLS.map((k, i) => k === "-" ? <Sep key={i} w="w-[8.200px]" /> : (
        <div key={i} className="flex w-[25px] shrink-0 justify-center"><Svg s="size-[17px]" dim={k[0] === "~"}>{I[k.replace("~", "")]}</Svg></div>
      ))}
    </div>
    <div className="flex h-[25px] shrink-0 border-y border-[#b0b0b0] bg-linear-to-b from-white to-[#ececec] pl-[23px] text-[14.3px]">
      {COLS.map((c) => <div key={c} className="flex w-[125px] shrink-0 items-center justify-center border-r border-[#c6c6c6] pt-[2px]">{c}</div>)}
    </div>
    <div className="flex h-[502px] shrink-0 flex-col overflow-hidden border-b border-[#b8b8b8] text-[14.3px]">
      {ROWS.map((r, i) => (
        <div key={i} className={`flex h-[37px] shrink-0 ${r[4] ? "text-white" : "text-black"}`}>
          <div className="flex w-[23px] shrink-0 items-center border-r border-b border-[#b4b4b4] bg-linear-to-b from-[#fafafa] to-[#ececec] pt-[4px] pl-[3px] text-black">{i + 1}</div>
          {[i + 1, ...r.slice(0, 4), "Dar-es-Salaam"].map((v, j) => (
            <div key={j} className={`flex w-[125px] shrink-0 items-center border-r border-b border-[#c6c6c6] pt-[2px] pr-[4px] pl-[3px] whitespace-nowrap ${j === 0 ? "justify-end" : ""} ${r[4] ? "bg-[#0078d7]" : i % 2 ? "bg-[#e7e6e2]" : "bg-white"}`}>{v}</div>
          ))}
        </div>
      ))}
    </div>
    <div className="h-[16px] shrink-0 border-b border-[#a8a8a8] bg-linear-to-b from-white to-[#ececec]" />
  </div>
);

/* ---------- select by expression dialog ---------- */

const TreeGroup = ({ t, open }) => (
  <div className="flex h-[20px] shrink-0 items-center">
    <div className="flex w-[25px] justify-end pr-[8px]"><Tri d={open ? "down" : "right"} /></div>
    <div className="flex h-[20px] flex-1 items-center bg-[#c0c0c0] pt-[2px] pl-[3px] tracking-[-0.03px]">{t}</div>
  </div>
);
const FIELDS = [["1.2", "FID"], ["abc", "Ward_Name"], ["abc", "Ward_Code"], ["abc", "District_N"], ["abc", "District_C"], ["abc", "Region_Nam"], ["abc", "Region_Cod"], ["1.2", "AREA"]];

const SearchBox = ({ cls }) => (
  <div className={`flex items-center gap-[8px] rounded-[3px] border border-[#a9a9a9] bg-white pl-[9px] tracking-[0.1px] text-[#7d7d7d] ${cls}`}><Svg s="size-4">{I.search}</Svg><span className="pt-[1px]">Search...</span></div>
);

const Dialog = () => (
  <div className="absolute top-[403px] left-[520px] flex h-[584px] w-[863px] flex-col overflow-hidden rounded-[8px] bg-[#efefef] font-['DejaVu_Sans_Condensed','DejaVu_Sans',sans-serif] text-[12.6px] text-black">
    <div className="flex h-[37px] shrink-0 items-center justify-between bg-white pr-[15px] pl-[9px]">
      <div className="flex items-center gap-[5px] font-['Open_Sans',sans-serif] text-[14.3px] tracking-[-0.1px]"><Logo />dar_es_salaam_administrative_wards — Select by Expression</div>
      <svg viewBox="0 0 12 12" className="size-3" stroke="#222" strokeWidth="1.200"><path d="m0 0 12 12M12 0 0 12" /></svg>
    </div>
    <div className="flex h-[33px] shrink-0 items-end px-[3px]">
      <div className="flex h-[30px] w-[92px] items-center justify-center rounded-t-[2px] border border-b-0 border-[#b4b4b4] bg-white pt-[3px] tracking-[-0.1px]">Expression</div>
      <div className="flex h-[28px] w-[114px] items-center justify-center rounded-tr-[2px] border border-l-0 border-[#b8b8b8] bg-[#e6e6e6] pt-[4px]">Function Editor</div>
      <div className="h-px flex-1 bg-[#b8b8b8]" />
    </div>
    <div className="flex h-[466px] shrink-0 pt-[12px] pl-[14px]">
      <div className="flex w-[296px] shrink-0 flex-col">
        <div className="flex h-[27px] shrink-0 gap-[2px]">
          {["page", "disk", "~editPage", "~trash", "importI", "exportI"].map((k) => (
            <PushBtn key={k} dim={k[0] === "~"} cls="h-[27px] w-[28px]"><Svg s="size-5" dim={k[0] === "~"}>{I[k.replace("~", "")]}</Svg></PushBtn>
          ))}
        </div>
        <div className="mt-[7px] h-[328px] shrink-0 border border-[#b4b4b4] bg-white p-px">
          <div className="flex h-[20px] items-center bg-[#efefef] pl-[10px] font-['Liberation_Mono',monospace] text-[16.67px] whitespace-pre text-[#718c00]">
            "AREA" <span className="text-[#8959a8]">&gt;</span><span className="text-[#d0404e]">10000000</span><span className="h-[20px] w-px bg-black" />
          </div>
        </div>
        <div className="mt-[7px] flex h-[25px] shrink-0 gap-[1.800px]">
          {["=", "+", "-", "/", "*", "^", "||", "(", ")", "'\\n'"].map((k, i) => <PushBtn key={k} focus={i === 0} cls="h-[25px] w-[28px] pt-[2px]">{k}</PushBtn>)}
        </div>
        <div className="mt-[10px] flex h-[27px] shrink-0 items-center">
          <span className="w-[51px] pt-px">Feature</span>
          <div className="flex h-[24px] w-[175px] items-center justify-between rounded-[3px] border border-[#a9a9a9] bg-linear-to-r from-white from-[86%] to-[#f2f2f2] to-[86%] pr-[9px] pl-[3px]"><span className="pt-px">Azimio</span><Tri d="down" /></div>
          <PushBtn dim cls="ml-[7px] h-[27px] w-[28px]"><svg viewBox="0 0 14 16" className="h-4 w-3.5"><path d="M13 .8v14.400L1.200 8z" fill="#d5d9dd" stroke="#b5b8bb" /></svg></PushBtn>
          <PushBtn cls="ml-[7px] h-[27px] w-[28px]"><svg viewBox="0 0 14 16" className="h-4 w-3.5"><path d="M1 .8v14.400L12.800 8z" fill="#6b97c9" stroke="#2d5584" /></svg></PushBtn>
        </div>
        <div className="mt-[6px] shrink-0 leading-[18px]">Preview: <span className="pl-[3px]">0</span></div>
      </div>
      <div className="flex w-[26px] shrink-0 pt-[219px] pl-[13px]"><VDots /></div>
      <div className="flex w-[250px] shrink-0 flex-col">
        <div className="flex h-[26px] shrink-0 justify-between">
          <SearchBox cls="h-[26px] w-[160px]" />
          <PushBtn dim cls="h-[25px] w-[83px] pt-[2px] whitespace-nowrap text-[#828282]">Show Values</PushBtn>
        </div>
        <div className="mt-[7px] flex h-[421px] shrink-0 border border-[#b4b4b4] bg-white">
          <div className="flex flex-1 flex-col overflow-hidden font-['Open_Sans',sans-serif] text-[14.3px]">
            <TreeGroup t="Color" /><TreeGroup t="Conditionals" /><TreeGroup t="Conversions" /><TreeGroup t="Date and Time" /><TreeGroup t="Fields and Values" open />
            {["feature", "geometry", "id", "NULL"].map((t) => <div key={t} className="flex h-[20px] shrink-0 items-center pt-[2px] pl-[53px]">{t}</div>)}
            {FIELDS.map(([k, t], i) => (
              <div key={t} className={`flex h-[22px] shrink-0 items-center pl-[53px] ${i === 7 ? "bg-[#efefef]" : ""}`}>
                <span className="w-[26px] text-[11.500px] font-bold text-[#5c5c5c]">{k}</span><span className="pt-[2px]">{t}</span>
              </div>
            ))}
            <TreeGroup t="Files and Paths" /><TreeGroup t="Fuzzy Matching" /><TreeGroup t="General" />
            <div className="ml-[25px] flex-1 bg-[#c0c0c0]" />
          </div>
          <VBar top="h-[54px]" slider="h-[222px]" />
        </div>
      </div>
      <div className="flex w-[14px] shrink-0 pt-[219px] pl-[3px]"><VDots /></div>
      <div className="flex w-[249px] shrink-0 flex-col">
        <div className="flex h-[189px] shrink-0 border border-[#b4b4b4] bg-white">
          <div className="flex-1 overflow-hidden pt-[4px] pr-[4px] pl-[4px] font-['Open_Sans',sans-serif] text-[13px] leading-[19px] tracking-[-0.12px] whitespace-nowrap">
            <div className="h-[23px] bg-[#f4f4f4] text-[16px] leading-[24px] font-bold tracking-[0px] text-[#93b023]">group field</div>
            <p className="pt-[13px]">Double-click to add field name to<br />expression string.<br />Right-Click on field name to open<br />context menu sample value loading<br />options.</p>
            <div className="mt-[11px] h-[19px] bg-[#f4f4f4] text-[13.500px] leading-[21px] font-bold tracking-[0px] text-[#93b023]">Notes</div>
            <p className="pt-[13px]">Loading field values from online</p>
          </div>
          <VBar top="h-0" slider="h-[112px]" />
        </div>
        <div className="mt-[10px] flex h-[26px] shrink-0 items-center justify-between"><span className="pt-[2px] tracking-[0.1px]">Values</span><SearchBox cls="h-[26px] w-[204px]" /></div>
        <div className="mt-[7px] flex shrink-0 justify-between"><PushBtn cls="h-[25px] w-[121px] pt-[3px]">All Unique</PushBtn><PushBtn cls="h-[25px] w-[121px] pt-[3px] tracking-[0.1px]">10 Samples</PushBtn></div>
        <div className="mt-[7px] h-[190px] shrink-0 border border-[#b4b4b4] bg-white" />
      </div>
    </div>
    <div className="flex flex-1 items-end justify-between pr-[3px] pb-[4px] pl-[3px]">
      <PushBtn cls="h-[25px] w-[80px] pt-[3px]">Help</PushBtn>
      <div className="-mb-[1px] flex items-center">
        <PushBtn cls="h-[27px] w-[129px] gap-[1px] pr-[7px] whitespace-nowrap"><Svg s="size-[19px]">{I.epsSel}</Svg><span className="pt-[3px] tracking-[0.1px]">Select Features</span></PushBtn>
        <PushBtn cls="h-[27px] w-[15px]"><Tri d="down" /></PushBtn>
        <PushBtn cls="ml-[14px] h-[25px] w-[80px] pt-[3px]"><span><U>C</U>lose</span></PushBtn>
      </div>
    </div>
  </div>
);

export default function App() {
  return (
    <div className="relative flex h-[992px] w-[1918px] flex-col overflow-hidden bg-[#efefef] font-['Open_Sans',sans-serif] text-black">
      <div className="flex h-[29px] shrink-0 items-center justify-between bg-white pr-[24px] pl-[2px]">
        <div className="flex items-center gap-[5px] text-[14.3px] text-[#959595]"><Logo /><span className="tracking-[-0.03px]">*Untitled Project — QGIS</span></div>
        <div className="flex items-center gap-[46px]">
          <svg viewBox="0 0 12 12" className="size-3" stroke="#8a8a8a"><path d="M0 5.500h12" /></svg>
          <svg viewBox="0 0 12 12" className="size-3" fill="none" stroke="#8a8a8a"><rect x=".5" y="2.500" width="9" height="9" rx="1.500" /><path d="M2.500.5h7a2 2 0 0 1 2 2v7" /></svg>
          <svg viewBox="0 0 12 12" className="size-3" stroke="#8a8a8a"><path d="m0 0 12 12M12 0 0 12" /></svg>
        </div>
      </div>
      <div className="flex h-[25px] shrink-0 items-center border-b border-[#d0d0d0] pt-[2px] pl-[11px] text-[14.3px] text-[#9a9a9a]">
        {MENU.map(([w, a, b, c]) => <div key={a + b + c} className={`${w} shrink-0 whitespace-nowrap`}>{a}{b && <U>{b}</U>}{c}</div>)}
      </div>
      <div className="flex h-[39px] shrink-0 items-center border-b border-[#b8b8b8] bg-linear-to-b from-[#fafafa] to-[#eeeeee]"><Grip w="w-[14px]" /><Bar items={ROW1} /></div>
      <div className="flex h-[39px] shrink-0 items-center border-b border-[#b0b0b0] bg-linear-to-b from-[#fafafa] to-[#eeeeee]"><Grip w="w-[14px]" /><Bar items={ROW2} /></div>
      <div className="flex min-h-0 flex-1">
        <LeftDock />
        <div className="flex w-[7px] shrink-0 pt-[421px] pl-[4px]"><VDots /></div>
        <MapCanvas />
        <div className="flex flex-1 flex-col pl-[7px]">
          <div className="flex flex-col pl-[3px]">
            <DockTitle cls="-mr-[2px] -ml-[4px]">Layer Styling</DockTitle>
            <div className="flex h-[25px] items-center gap-2 rounded-[3px] border border-[#a9a9a9] bg-linear-to-b from-white to-[#efefef] pl-[4px] text-[14.3px]"><Svg s="size-5">{I.folder}</Svg><span className="pt-[6px]">dar_es_salaam_administrative_wards</span></div>
          </div>
          <div className="mt-[8px] h-[801px] border border-r-0 border-[#b8b8b8] bg-white" />
        </div>
      </div>
      <AttributeTable />
      <div className="absolute top-[403px] left-[520px] h-[584px] w-[863px] rounded-[8px] shadow-[0_0_2px_rgba(0,0,0,0.4),0_18px_44px_rgba(0,0,0,0.45)]" />
      <Dialog />
    </div>
  );
}
